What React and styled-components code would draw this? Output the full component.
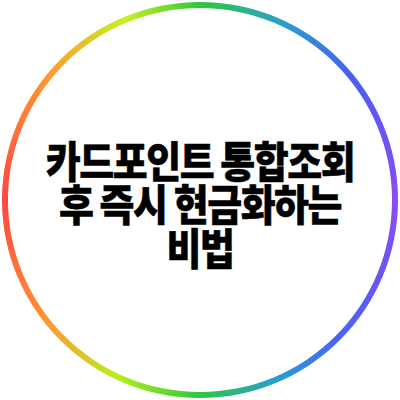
import React from "react";
import styled, { createGlobalStyle } from "styled-components";

const GlobalStyle = createGlobalStyle`
  html, body {
    margin: 0;
    padding: 0;
    background: #ffffff;
  }
`;

const Page = styled.div`
  width: 400px;
  height: 400px;
  display: flex;
  align-items: center;
  justify-content: center;
  background: #ffffff;
`;

// 무지개 링
const Ring = styled.div`
  width: 396px;
  height: 396px;
  box-sizing: border-box;
  padding: 6px;
  border-radius: 50%;
  background: conic-gradient(
    #2ec83c 0deg,
    #2a9fd0 25deg,
    #4a5ff2 50deg,
    #8a4cf2 90deg,
    #4a62f2 135deg,
    #2a9fd0 158deg,
    #2ec83c 180deg,
    #b8ee20 205deg,
    #ff9a30 230deg,
    #ff4444 270deg,
    #ff9a30 310deg,
    #c8f020 338deg,
    #2ec83c 360deg
  );
`;

const Inner = styled.div`
  width: 100%;
  height: 100%;
  border-radius: 50%;
  background: #ffffff;
  display: flex;
  align-items: center;
  justify-content: center;
`;

// 세로로 살짝 늘린 굵은 제목
const Title = styled.h1`
  margin: 6px 0 0;
  font-family: "Noto Sans CJK KR", "Noto Sans", sans-serif;
  font-weight: 900;
  font-size: 38px;
  line-height: 38px;
  letter-spacing: -1.5px;
  word-spacing: 0px;
  color: #000000;
  text-align: center;
  transform: scaleY(1.14);
  -webkit-text-stroke: 0.4px #000;
`;

export default function App() {
  return (
    <Page>
      <GlobalStyle />
      <Ring>
        <Inner>
          <Title>
            카드포인트 통합조회
            <br />
            후 즉시 현금화하는
            <br />
            비법
          </Title>
        </Inner>
      </Ring>
    </Page>
  );
}
